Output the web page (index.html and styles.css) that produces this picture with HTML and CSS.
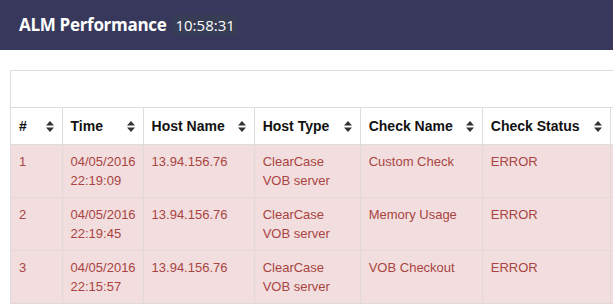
FILE: index.html
```html
<!DOCTYPE html>
<html>
<head>
<meta charset="utf-8">
<link rel="stylesheet" href="styles.css">
</head>
<body>
<header class="topbar">
  <span class="brand">ALM Performance</span>
  <span class="clock">10:58:31</span>
</header>
<main class="content">
  <div class="panel">
    <div class="toolbar"></div>
    <table class="grid">
      <colgroup>
        <col class="c1"><col class="c2"><col class="c3"><col class="c4"><col class="c5"><col class="c6"><col class="c7">
      </colgroup>
      <thead>
        <tr>
          <th><span class="th-in">#<svg class="sort" viewBox="0 0 8 11"><path d="M4 0 L8 4.5 L0 4.5 Z M0 6.5 L8 6.5 L4 11 Z"/></svg></span></th>
          <th><span class="th-in">Time<svg class="sort" viewBox="0 0 8 11"><path d="M4 0 L8 4.5 L0 4.5 Z M0 6.5 L8 6.5 L4 11 Z"/></svg></span></th>
          <th><span class="th-in">Host Name<svg class="sort" viewBox="0 0 8 11"><path d="M4 0 L8 4.5 L0 4.5 Z M0 6.5 L8 6.5 L4 11 Z"/></svg></span></th>
          <th><span class="th-in">Host Type<svg class="sort" viewBox="0 0 8 11"><path d="M4 0 L8 4.5 L0 4.5 Z M0 6.5 L8 6.5 L4 11 Z"/></svg></span></th>
          <th><span class="th-in">Check Name<svg class="sort" viewBox="0 0 8 11"><path d="M4 0 L8 4.5 L0 4.5 Z M0 6.5 L8 6.5 L4 11 Z"/></svg></span></th>
          <th><span class="th-in">Check Status<svg class="sort" viewBox="0 0 8 11"><path d="M4 0 L8 4.5 L0 4.5 Z M0 6.5 L8 6.5 L4 11 Z"/></svg></span></th>
          <th></th>
        </tr>
      </thead>
      <tbody>
        <tr class="danger">
          <td>1</td><td>04/05/2016 22:19:09</td><td>13.94.156.76</td><td>ClearCase VOB server</td><td>Custom Check</td><td>ERROR</td><td></td>
        </tr>
        <tr class="danger">
          <td>2</td><td>04/05/2016 22:19:45</td><td>13.94.156.76</td><td>ClearCase VOB server</td><td>Memory Usage</td><td>ERROR</td><td></td>
        </tr>
        <tr class="danger">
          <td>3</td><td>04/05/2016 22:15:57</td><td>13.94.156.76</td><td>ClearCase VOB server</td><td>VOB Checkout</td><td>ERROR</td><td></td>
        </tr>
      </tbody>
    </table>
  </div>
</main>
</body>
</html>
```
FILE: styles.css
```css
html, body {
  margin: 0;
  padding: 0;
  overflow: hidden;
  background: #fff;
}
body {
  font-family: "Liberation Sans", Arial, sans-serif;
  font-size: 14px;
  line-height: 20px;
  color: #333;
}
.topbar {
  height: 50px;
  background: #37385b;
  display: flex;
  align-items: center;
  padding-left: 19px;
  gap: 9px;
  color: #fff;
  font-family: "Open Sans", "Noto Sans", sans-serif;
}
.brand {
  font-weight: 700;
  font-size: 17px;
  letter-spacing: -0.3px;
}
.clock {
  font-size: 15px;
  font-weight: 400;
  background: #363d55;
  padding: 0 2px;
  margin-left: -2px;
}
.content {
  padding: 20px 0 0 10px;
}
.panel {
  border-top: 1px solid #dddddd;
  border-left: 1px solid #dddddd;
  overflow: hidden;
}
.toolbar {
  height: 36px;
}
.grid {
  border-collapse: collapse;
  table-layout: fixed;
  width: 760px;
}
.c1 { width: 51px; }
.c2 { width: 81px; }
.c3 { width: 111px; }
.c4 { width: 106px; }
.c5 { width: 122px; }
.c6 { width: 128px; }
.c7 { width: 160px; }
.grid th, .grid td {
  border: 1px solid #dddddd;
  text-align: left;
  vertical-align: top;
}
.grid tr > :first-child { border-left: 0; }
.grid th {
  padding: 8px 8px;
  font-weight: 700;
  color: #111;
  white-space: nowrap;
}
.th-in {
  display: flex;
  align-items: center;
  justify-content: space-between;
}
.sort {
  width: 8px;
  height: 11px;
  fill: #333;
  flex: none;
}
.grid td {
  padding: 7px 8px;
  font-size: 13px;
  line-height: 19px;
}
.danger td {
  background: #f2dede;
  color: #a94442;
  border-color: #e3d8d8;
}
```
